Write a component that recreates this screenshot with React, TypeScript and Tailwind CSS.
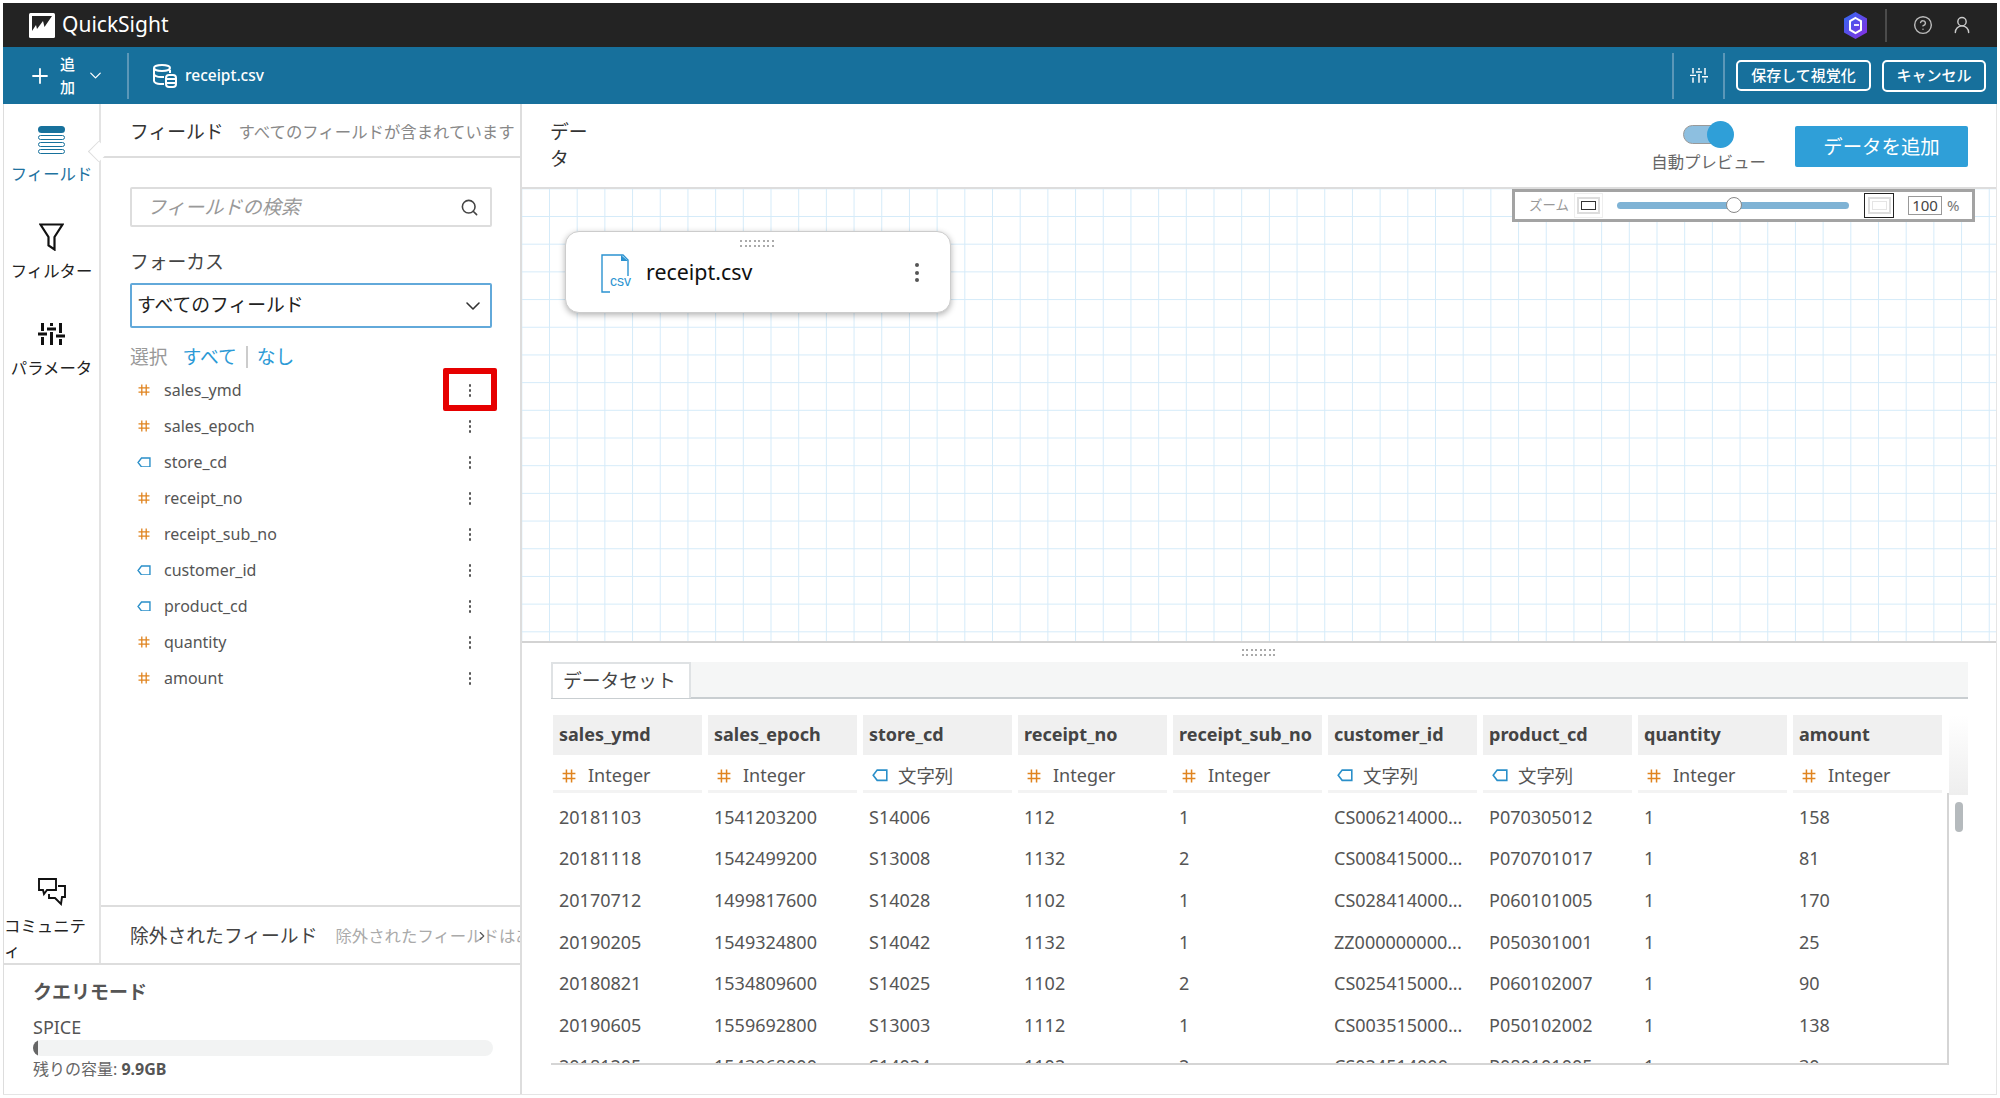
import { ChevronDown, CircleHelp, Plus, Search, UserRound } from "lucide-react";

const font = "[font-family:'Noto_Sans','Noto_Sans_CJK_JP',sans-serif]";

const fields = [
  { name: "sales_ymd", kind: "num" },
  { name: "sales_epoch", kind: "num" },
  { name: "store_cd", kind: "str" },
  { name: "receipt_no", kind: "num" },
  { name: "receipt_sub_no", kind: "num" },
  { name: "customer_id", kind: "str" },
  { name: "product_cd", kind: "str" },
  { name: "quantity", kind: "num" },
  { name: "amount", kind: "num" },
];

const rows = [
  ["20181103", "1541203200", "S14006", "112", "1", "CS006214000...", "P070305012", "1", "158"],
  ["20181118", "1542499200", "S13008", "1132", "2", "CS008415000...", "P070701017", "1", "81"],
  ["20170712", "1499817600", "S14028", "1102", "1", "CS028414000...", "P060101005", "1", "170"],
  ["20190205", "1549324800", "S14042", "1132", "1", "ZZ000000000...", "P050301001", "1", "25"],
  ["20180821", "1534809600", "S14025", "1102", "2", "CS025415000...", "P060102007", "1", "90"],
  ["20190605", "1559692800", "S13003", "1112", "1", "CS003515000...", "P050102002", "1", "138"],
  ["20181205", "1543968000", "S14024", "1102", "2", "CS024514000...", "P080101005", "1", "30"],
];

const HashIcon = ({ size = 12 }: { size?: number }) => (
  <svg width={size} height={size} viewBox="0 0 12 12" className="shrink-0" fill="none" stroke="#e0841f" strokeWidth="1.3">
    <path d="M3.8 .5v11M8.2 .5v11M.5 3.8h11M.5 8.2h11" />
  </svg>
);

const TagIcon = ({ size = 14 }: { size?: number }) => (
  <svg width={size} height={size * 0.78} viewBox="0 0 14 11" className="shrink-0" fill="none" stroke="#2a8fc9" strokeWidth="1.4">
    <path d="M13 1H4.5L1 5.5 4.5 10H13z" />
  </svg>
);

const Kebab = ({ className }: { className: string }) => (
  <span className={`flex flex-col items-center gap-[2.5px] ${className}`}>
    <i className="size-[2.5px] rounded-full bg-[#555]" />
    <i className="size-[2.5px] rounded-full bg-[#555]" />
    <i className="size-[2.5px] rounded-full bg-[#555]" />
  </span>
);

const SlidersIcon = ({ size, color, width = 2.4 }: { size: number; color: string; width?: number }) => (
  <svg width={size} height={size * 0.82} viewBox="0 0 27 22" fill="none" stroke={color} strokeWidth={width}>
    <path d="M4.5 0v8M4.5 14v8M13.5 0v3M13.5 9v13M22.5 0v10M22.5 16v6" strokeWidth={width + 0.6} />
    <path d="M0 11h9M9 6h9M18 13h9" strokeWidth={width + 0.6} />
  </svg>
);

const DragDots = () => (
  <div className="grid grid-cols-[repeat(8,2px)] gap-x-[2.5px] gap-y-[2.5px]">
    {Array.from({ length: 16 }).map((_, i) => (
      <i key={i} className="size-[2px] bg-[#aaa]" />
    ))}
  </div>
);

const SideItem = ({ icon, label, active }: { icon: React.ReactNode; label: string; active?: boolean }) => (
  <div className="flex flex-col items-center">
    <div className="flex h-[28px] items-center">{icon}</div>
    <span className={`mt-[8px] text-[16.4px] leading-[24px] ${active ? "text-[#1f739f]" : "text-[#222]"}`}>{label}</span>
  </div>
);

const Sidebar = () => (
  <div className="relative flex h-full w-[97px] shrink-0 flex-col items-center border-r-[2px] border-[#e3e3e3] pt-[22px]">
    <SideItem
      active
      label="フィールド"
      icon={
        <div className="flex w-[27px] flex-col gap-[2px]">
          <i className="h-[7px] rounded-full bg-[#17719c]" />
          <i className="h-[5px] rounded-full border-[1.5px] border-[#17719c]" />
          <i className="h-[5px] rounded-full border-[1.5px] border-[#17719c]" />
          <i className="h-[5px] rounded-full border-[1.5px] border-[#17719c]" />
        </div>
      }
    />
    <div className="mt-[37px]">
      <SideItem
        label="フィルター"
        icon={
          <svg width="25" height="28" viewBox="0 0 25 28" fill="none" stroke="#111" strokeWidth="2.2">
            <path d="M1.5 1.5h22L15.500 14v12.500l-6-4V14z" />
          </svg>
        }
      />
    </div>
    <div className="mt-[37px]">
      <SideItem label="パラメータ" icon={<SlidersIcon size={27} color="#111" />} />
    </div>
    <div className="mt-auto flex flex-col items-center">
      <svg width="28" height="28" viewBox="0 0 28 28" fill="none" stroke="#111" strokeWidth="1.9">
        <path d="M1 1h17v11H9l-3 4-1-4H1z" />
        <path d="M20 8h7v11h-3l-1 7-6-6h-6v-4" />
      </svg>
      <span className="mt-[7px] w-[95px] text-[16.4px] leading-[25px] text-[#222]">コミュニティ</span>
    </div>
    {/* tab notch */}
    <i className="absolute top-[40px] right-[-7px] size-[15px] rotate-45 border-b-[1.5px] border-l-[1.5px] border-[#ddd] bg-white" />
  </div>
);

const FieldPanel = () => (
  <div className="flex h-full min-w-0 flex-1 flex-col">
    <div className="flex h-[54px] shrink-0 items-center overflow-hidden whitespace-nowrap border-b-[2px] border-[#ddd] pt-[4px] pl-[29px]">
      <span className="text-[18.8px] text-[#333]">フィールド</span>
      <span className="ml-[15px] text-[16.4px] text-[#888]">すべてのフィールドが含まれています</span>
    </div>
    <div className="flex-1 pt-[29px] pl-[29px] pr-[28px]">
      <div className="flex h-[40px] items-center justify-between rounded-[2px] border-[2px] border-[#ddd] pr-[11px] pl-[15px]">
        <span className="text-[19.2px] italic text-[#999]">フィールドの検索</span>
        <Search size={19} strokeWidth={2} className="text-[#444]" />
      </div>
      <div className="mt-[22px] text-[18.8px] leading-[26px] text-[#444]">フォーカス</div>
      <div className="mt-[8px] flex h-[45px] items-center justify-between rounded-[2px] border-[2px] border-[#62a9da] pr-[5px] pl-[5px] text-[18.8px] text-[#222]">
        <span>すべてのフィールド</span>
        <ChevronDown size={24} strokeWidth={1.6} className="text-[#333]" />
      </div>
      <div className="mt-[16px] flex h-[26px] items-center text-[18.8px]">
        <span className="text-[#999]">選択</span>
        <span className="ml-[15px] text-[#2c9ad6]">すべて</span>
        <i className="mx-[9px] h-[22px] w-[2px] bg-[#ccc]" />
        <span className="text-[#2c9ad6]">なし</span>
      </div>
      <div className="mt-[2px] w-[368px]">
        {fields.map((f, i) => (
          <div key={f.name} className="relative flex h-[36px] items-center text-[16px] text-[#555]">
            <span className="flex w-[34px] justify-center pr-[6px]">
              {f.kind === "num" ? <HashIcon /> : <TagIcon />}
            </span>
            <span>{f.name}</span>
            <Kebab className="absolute right-[27px] top-[12px]" />
            {i === 0 && <i className="absolute top-[-4px] right-[1px] h-[43px] w-[54px] rounded-[2px] border-[6px] border-[#e60000]" />}
          </div>
        ))}
      </div>
    </div>
    <div className="relative flex h-[58px] shrink-0 items-center overflow-hidden whitespace-nowrap border-t-[2px] border-[#ddd] pt-[2px] pl-[29px]">
      <span className="text-[18.8px] text-[#444]">除外されたフィールド</span>
      <span className="ml-[18px] text-[16.4px] text-[#aaa]">除外されたフィールドはありません</span>
      <ChevronDown size={14} className="absolute left-[374px] top-[22px] -rotate-90 text-[#555]" />
    </div>
  </div>
);

const QueryMode = () => (
  <div className="h-[131px] shrink-0 border-t-[2px] border-[#ddd] pt-[14px] pl-[29px]">
    <div className="text-[19px] font-bold leading-[26px] text-[#555]">クエリモード</div>
    <div className="mt-[10px] text-[18px] leading-[24px] text-[#555]">SPICE</div>
    <div className="mt-[1px] h-[16px] w-[460px] overflow-hidden rounded-full bg-[#f2f3f3]">
      <i className="block h-full w-[5px] bg-[#666]" />
    </div>
    <div className="mt-[2px] text-[16px] leading-[22px] text-[#666]">
      残りの容量: <b className="font-bold text-[#555]">9.9GB</b>
    </div>
  </div>
);

const TopBar = () => (
  <div className="flex h-[44px] shrink-0 items-center bg-[#232323] pl-[26px] pr-[25px] text-white">
    <svg width="26" height="25" viewBox="0 0 26 25">
      <rect width="26" height="25" rx="1.5" fill="#fff" />
      <path d="M3 3h20L15.500 14l-1.500-6-6 8-1-4-4 6z" fill="#232323" />
    </svg>
    <span className="ml-[7px] text-[21px]">QuickSight</span>
    <svg width="25" height="27" viewBox="0 0 25 27" className="ml-auto">
      <defs>
        <linearGradient id="hexFill" x1="0" y1="0" x2="1" y2="1">
          <stop offset="0" stopColor="#2f6bf0" />
          <stop offset="1" stopColor="#8a2be2" />
        </linearGradient>
      </defs>
      <path d="M12.5 0 24 6.500v14L12.500 27 1 20.500v-14z" fill="url(#hexFill)" />
      <path d="M12.500 6 18 9.200v8.600L12.500 21 7 17.800V9.200z" fill="none" stroke="#fff" strokeWidth="2" />
      <path d="M11 13h5" stroke="#fff" strokeWidth="1.8" />
    </svg>
    <i className="ml-[17px] h-[33px] w-[2px] bg-[#4b4b4b]" />
    <CircleHelp size={20} strokeWidth={1.7} className="ml-[26px] text-[#bbb]" />
    <UserRound size={20} strokeWidth={1.7} className="ml-[19px] text-[#ccc]" />
  </div>
);

const ActionBar = () => (
  <div className="flex h-[57px] shrink-0 items-center bg-[#17709c] pr-[11px] text-white">
    <Plus size={24} strokeWidth={1.8} className="ml-[25px]" />
    <span className="ml-[8px] w-[18px] text-[15px] leading-[23px] font-medium">追加</span>
    <ChevronDown size={19} strokeWidth={1.6} className="ml-[8px]" />
    <i className="ml-[22px] h-[46px] w-[2px] bg-[#5b97b8]" />
    <svg width="24" height="24" viewBox="0 0 24 24" fill="none" stroke="#fff" strokeWidth="2" className="ml-[24px]">
      <ellipse cx="9" cy="4" rx="8" ry="3" />
      <path d="M1 4v13c0 1.500 3 3 6 3h4M1 10c0 1.500 3 3 7 3h3M17 6v3" />
      <rect x="13" y="11" width="10" height="12" rx="3" />
      <path d="M13 15h10M13 19h10" />
    </svg>
    <span className="ml-[8px] text-[15.5px] font-medium">receipt.csv</span>
    <i className="ml-auto h-[46px] w-[2px] bg-[#5b97b8]" />
    <span className="flex w-[49px] justify-center">
      <SlidersIcon size={18} color="#fff" width={1.6} />
    </span>
    <i className="h-[46px] w-[2px] bg-[#5b97b8]" />
    <button className="ml-[11px] flex h-[31px] w-[135px] items-center justify-center rounded-[5px] border-[2px] border-white text-[15px] font-medium">
      保存して視覚化
    </button>
    <button className="ml-[11px] flex h-[32px] w-[104px] items-center justify-center rounded-[5px] border-[2px] border-white text-[15px] font-medium">
      キャンセル
    </button>
  </div>
);

const ZoomBar = () => (
  <div className="absolute top-[0px] right-[21px] flex h-[33px] w-[463px] items-center border-[3px] border-[#a3a3a3] bg-white pl-[14px] text-[#999]">
    <span className="w-[40px] text-[13.4px] whitespace-nowrap">ズーム</span>
    <span className="ml-[5px] flex h-[25px] w-[29px] items-center justify-center border border-[#eee]">
      <span className="flex h-[17px] w-[23px] items-center justify-center border-[2px] border-[#ddd]">
        <i className="h-[9px] w-[15px] border-[1.5px] border-[#333]" />
      </span>
    </span>
    <div className="relative ml-[14px] h-[7px] w-[232px] rounded-full bg-[#7fb3d5]">
      <i className="absolute top-[-5px] left-[109px] size-[16px] rounded-full border-[1.5px] border-[#888] bg-white" />
    </div>
    <span className="ml-[15px] flex h-[25px] w-[30px] items-center justify-center border-[1.5px] border-[#222]">
      <span className="flex h-[17px] w-[23px] items-center justify-center border-[2px] border-[#ddd]">
        <i className="h-[9px] w-[15px] border-[1.5px] border-[#e5e5e5]" />
      </span>
    </span>
    <span className="ml-[14px] flex h-[19px] w-[34px] items-center justify-center border border-[#999] text-[15px] text-[#444]">
      100
    </span>
    <span className="ml-[5px] text-[15px] text-[#777]">%</span>
  </div>
);

const Canvas = () => (
  <div className="relative h-[452px] shrink-0 bg-[linear-gradient(#d5ebf9_1.2px,transparent_1.2px),linear-gradient(90deg,#d5ebf9_1.2px,transparent_1.2px)] bg-size-[27.7px_27.7px] bg-position-[27px_27px]">
    <ZoomBar />
    <div className="absolute top-[42px] left-[43px] flex h-[82px] w-[386px] items-center rounded-[14px] border border-[#ccc] bg-white pl-[35px] shadow-[0_2px_6px_rgba(0,0,0,0.3)]">
      <span className="absolute top-[8px] left-[174px]">
        <DragDots />
      </span>
      <svg width="32" height="39" viewBox="0 0 32 39" fill="none" className="mt-[2px]">
        <path d="M9 1H1v37h8M8 1h14l5 5v16" stroke="#2b93d1" strokeWidth="1.400" />
        <path d="M20 1l7 6h-7z" fill="#2b93d1" />
        <text x="9" y="32" fontSize="14" fill="#2b93d1" fontFamily="Liberation Sans, sans-serif">
          csv
        </text>
      </svg>
      <span className="ml-[13px] text-[21.4px] text-[#111]">receipt.csv</span>
      <span className="absolute top-[31px] right-[31px] flex flex-col gap-[3.500px]">
        <i className="size-[4px] rounded-full bg-[#555]" />
        <i className="size-[4px] rounded-full bg-[#555]" />
        <i className="size-[4px] rounded-full bg-[#555]" />
      </span>
    </div>
  </div>
);

const DataSet = () => (
  <div className="flex-1 overflow-hidden border-t-[2px] border-[#d3d3d3] pl-[29px]">
    <div className="flex h-[19px] items-center justify-center pr-[30px]">
      <DragDots />
    </div>
    <div className="flex h-[37px] w-[1417px] border-b-[2px] border-[#c9ced1] bg-[#f5f6f6]">
      <div className="flex h-[36px] w-[140px] items-center border-x-[2px] border-t-[2px] border-[#dfe2e4] bg-white pl-[10px] text-[18.8px] text-[#444]">
        データセット
      </div>
    </div>
    <div className="mt-[16px] flex w-[1417px]">
      <div className="w-[1398px]">
        <div className="grid grid-cols-[repeat(9,149px)] gap-x-[6px] pl-[2px]">
          {fields.map((f) => (
            <div key={f.name} className="flex h-[40px] items-center bg-[#f0f0f0] pb-[1px] pl-[6px] text-[18px] font-bold whitespace-nowrap text-[#444]">
              {f.name}
            </div>
          ))}
          {fields.map((f) => (
            <div key={f.name} className="flex h-[38px] items-center gap-[12px] border-b-[3px] border-[#f3f3f3] pt-[6px] pl-[9px] text-[18px] text-[#555]">
              {f.kind === "num" ? <HashIcon size={14} /> : <TagIcon size={16} />}
              {f.kind === "num" ? "Integer" : <span className="-ml-[2px] text-[18.4px]">文字列</span>}
            </div>
          ))}
        </div>
        <div className="h-[272px] overflow-hidden border-r-[2px] border-b-[2px] border-[#d5d5d5] pl-[2px]">
          {rows.map((r) => (
            <div key={r[0]} className="grid h-[41.6px] grid-cols-[repeat(9,149px)] items-center gap-x-[6px] first:mt-[3.500px]">
              {r.map((c, i) => (
                <span key={i} className="pl-[6px] text-[18px] whitespace-nowrap text-[#555]">
                  {c}
                </span>
              ))}
            </div>
          ))}
        </div>
      </div>
      <div className="flex w-[19px] flex-col items-center">
        <div className="h-[80px] w-full bg-[linear-gradient(#ffffff,#eeeeee)]" />
        <i className="mt-[7px] h-[30px] w-[8px] rounded-full bg-[#b5babd]" />
      </div>
    </div>
  </div>
);

export default function App() {
  return (
    <div className={`flex h-[1098px] w-[2000px] flex-col overflow-hidden bg-white p-[3px] ${font}`}>
      <TopBar />
      <ActionBar />
      <div className="flex min-h-0 flex-1 border-b border-[#e5e5e5]">
        <div className="flex w-[519px] shrink-0 flex-col border-r-[2px] border-l border-[#ddd]">
          <div className="flex min-h-0 flex-1">
            <Sidebar />
            <FieldPanel />
          </div>
          <QueryMode />
        </div>
        <div className="flex min-w-0 flex-1 flex-col border-r border-[#e5e5e5]">
          <div className="flex h-[85px] shrink-0 items-start border-b-[2px] border-[#ddd]">
            <div className="mt-[15px] ml-[28px] w-[40px] text-[18.8px] leading-[27px] text-[#333]">データ</div>
            <div className="mt-[17px] ml-auto flex flex-col items-center">
              <span className="relative block h-[27px] w-[51px]">
                <i className="absolute top-[4px] left-0 h-[19px] w-[44px] rounded-full border border-[#999] bg-[#8dbfe0]" />
                <i className="absolute top-0 right-0 size-[27px] rounded-full bg-[#2f9fd8]" />
              </span>
              <span className="mt-[2px] text-[16.4px] leading-[24px] text-[#666]">自動プレビュー</span>
            </div>
            <button className="mt-[22px] mr-[28px] ml-[29px] flex h-[41px] w-[173px] items-center justify-center rounded-[2px] bg-[#2f9fd8] text-[19.4px] text-white">
              データを追加
            </button>
          </div>
          <Canvas />
          <DataSet />
        </div>
      </div>
    </div>
  );
}
